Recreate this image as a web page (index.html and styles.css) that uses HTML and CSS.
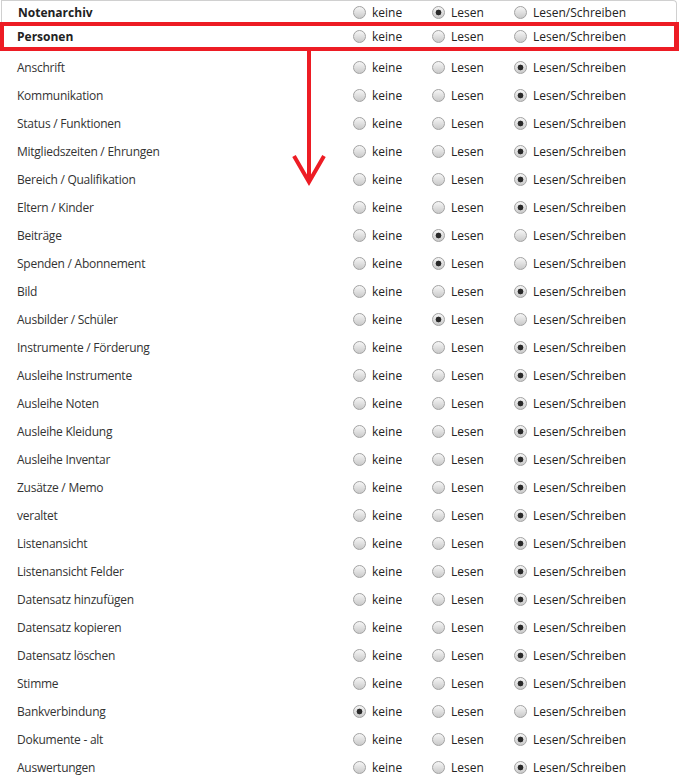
FILE: index.html
```
<!DOCTYPE html>
<html>
<head>
    <title>Rechte - Personen</title>
    <link rel="stylesheet" href="styles.css">
</head>
<body>
    <div class="rights">
        <div class="row head-row">
            <span class="label bold">Notenarchiv</span>
            <label class="opt"><input type="radio" name="r0"> keine</label>
            <label class="opt"><input type="radio" name="r0" checked> Lesen</label>
            <label class="opt"><input type="radio" name="r0"> Lesen/Schreiben</label>
        </div>
        <div class="row marked-row">
            <span class="label bold">Personen</span>
            <label class="opt"><input type="radio" name="r1"> keine</label>
            <label class="opt"><input type="radio" name="r1"> Lesen</label>
            <label class="opt"><input type="radio" name="r1"> Lesen/Schreiben</label>
        </div>
        <div class="list" id="list">
            <!-- rows are filled in by the script below -->
        </div>

        <svg class="arrow" width="40" height="136" viewBox="0 0 40 136">
            <line x1="19" y1="0" x2="19" y2="130" />
            <polyline points="4,105 19,131 34,105" />
        </svg>
    </div>

    <script>
        const rows = [
            ["Anschrift", 2],
            ["Kommunikation", 2],
            ["Status / Funktionen", 2],
            ["Mitgliedszeiten / Ehrungen", 2],
            ["Bereich / Qualifikation", 2],
            ["Eltern / Kinder", 2],
            ["Beiträge", 1],
            ["Spenden / Abonnement", 1],
            ["Bild", 2],
            ["Ausbilder / Schüler", 1],
            ["Instrumente / Förderung", 2],
            ["Ausleihe Instrumente", 2],
            ["Ausleihe Noten", 2],
            ["Ausleihe Kleidung", 2],
            ["Ausleihe Inventar", 2],
            ["Zusätze / Memo", 2],
            ["veraltet", 2],
            ["Listenansicht", 2],
            ["Listenansicht Felder", 2],
            ["Datensatz hinzufügen", 2],
            ["Datensatz kopieren", 2],
            ["Datensatz löschen", 2],
            ["Stimme", 2],
            ["Bankverbindung", 0],
            ["Dokumente - alt", 2],
            ["Auswertungen", 2]
        ];
        const names = ["keine", "Lesen", "Lesen/Schreiben"];
        const list = document.getElementById("list");

        rows.forEach(function (r, i) {
            const row = document.createElement("div");
            row.className = "row";
            const label = document.createElement("span");
            label.className = "label";
            label.textContent = r[0];
            row.appendChild(label);
            for (let k = 0; k < 3; k++) {
                const opt = document.createElement("label");
                opt.className = "opt";
                const input = document.createElement("input");
                input.type = "radio";
                input.name = "p" + i;
                if (k === r[1]) input.checked = true;
                opt.appendChild(input);
                opt.appendChild(document.createTextNode(" " + names[k]));
                row.appendChild(opt);
            }
            list.appendChild(row);
        });
    </script>
</body>
</html>
```

FILE: styles.css
```
body {
    margin: 0;
    padding: 0;
    background-color: #fff;
    font-family: "Open Sans", sans-serif;
    font-size: 12px;
    color: #222;
}

.rights {
    position: relative;
    width: 679px;
}

.row {
    display: grid;
    grid-template-columns: 353px 79px 82px 1fr;
    align-items: center;
    height: 28px;
}

.label {
    padding-left: 17px;
    color: #333;
    letter-spacing: -0.25px;
}

.bold {
    font-weight: bold;
    color: #222;
    letter-spacing: 0;
}

.head-row {
    height: 22px;
    padding-top: 2px;
    box-sizing: border-box;
    margin: 0 2px 0 1px;
    border: 1px solid #d0d0d0;
    border-bottom: none;
    border-radius: 0 4px 0 0;
    grid-template-columns: 351px 79px 82px 1fr;
}

.head-row .label {
    padding-left: 16px;
}

.marked-row {
    height: 29px;
    box-sizing: border-box;
    border: 4px solid #ed1c24;
    border-right-width: 5px;
    grid-template-columns: 349px 79px 82px 1fr;
}

.marked-row .label {
    padding-left: 13px;
}

.list {
    margin-top: 2px;
}

.opt {
    display: flex;
    align-items: center;
    white-space: nowrap;
}

.opt input {
    appearance: none;
    -webkit-appearance: none;
    width: 13px;
    height: 13px;
    margin: 0 6px 0 0;
    border: 1px solid #a2a2a2;
    border-radius: 50%;
    background: linear-gradient(#f6f6f6, #cacaca);
    box-sizing: border-box;
}

.opt input:checked {
    background: radial-gradient(circle, #2a2a2a 0, #2a2a2a 2.6px, rgba(0, 0, 0, 0) 3.2px), linear-gradient(#f6f6f6, #cacaca);
}

.arrow {
    position: absolute;
    left: 290px;
    top: 51px;
}

.arrow line,
.arrow polyline {
    stroke: #ed1c24;
    stroke-width: 4;
    fill: none;
}
```
